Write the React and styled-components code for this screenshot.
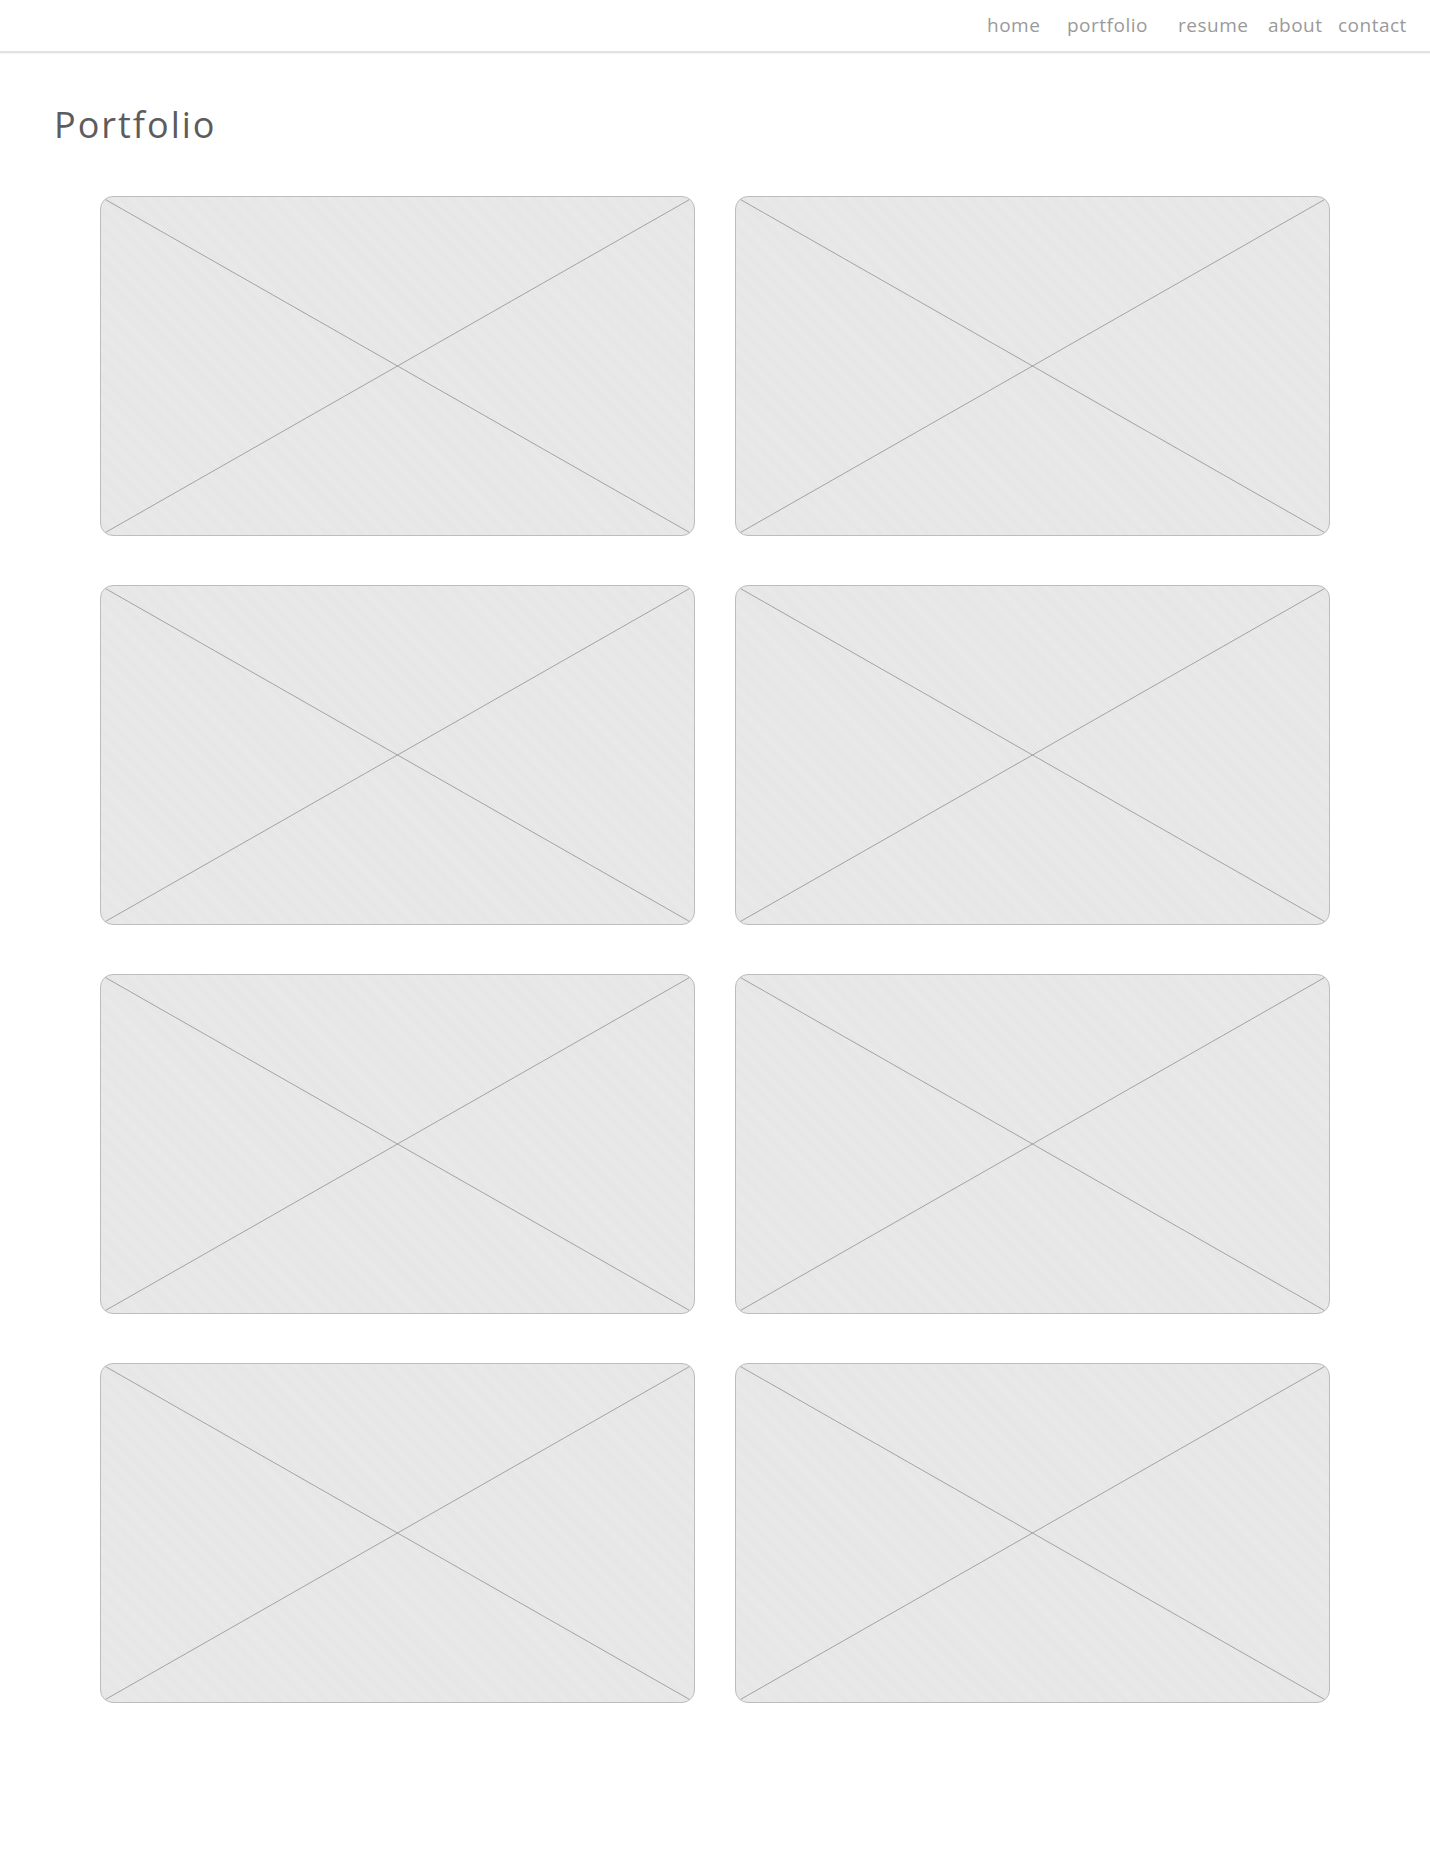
import React from 'react';
import styled, { createGlobalStyle } from 'styled-components';

const GlobalStyle = createGlobalStyle`
    html, body {
        margin: 0;
        padding: 0;
        background: #fff;
    }
    body {
        font-family: "Open Sans", "Noto Sans", sans-serif;
    }
`;

const Header = styled.header`
    height: 51px;
    border-bottom: 2px solid #e2e2e2;
    box-shadow: 0 1px 1px rgba(0, 0, 0, 0.04);
    display: flex;
    justify-content: flex-end;
    align-items: center;
    padding-right: 22px;
`;

const Nav = styled.nav`
    display: flex;
    align-items: center;
    height: 100%;
`;

const NavLink = styled.a`
    display: block;
    width: ${props => props.width}px;
    font-size: 19px;
    letter-spacing: 0.5px;
    color: #9a9a9a;
    text-decoration: none;
    line-height: 1;
    padding-bottom: 1px;
    white-space: nowrap;
`;

const Main = styled.main`
    padding: 0 0 0 54px;
`;

const Title = styled.h1`
    margin: 0;
    padding-top: 49px;
    font-size: 36px;
    font-weight: 400;
    letter-spacing: 2px;
    line-height: 1.25;
    color: #5c5c5c;
`;

const Grid = styled.div`
    display: grid;
    grid-template-columns: 595px 595px;
    column-gap: 40px;
    row-gap: 49px;
    margin: 49px 0 0 46px;
`;

const Card = styled.div`
    height: 338px;
    border: 1px solid #bdbdbd;
    border-radius: 13px;
    background-color: #e5e5e5;
    background-image: repeating-linear-gradient(45deg, rgba(255,255,255,0.18) 0 1px, transparent 1px 2px);
    overflow: hidden;
`;

const Cross = styled.svg`
    display: block;
    width: 100%;
    height: 100%;
`;

const links = [
    { label: 'home', width: 80 },
    { label: 'portfolio', width: 111 },
    { label: 'resume', width: 90 },
    { label: 'about', width: 70 },
    { label: 'contact', width: 70 },
];

function Placeholder() {
    return (
        <Card>
            <Cross viewBox="0 0 100 100" preserveAspectRatio="none">
                <line x1="0" y1="0" x2="100" y2="100" stroke="#a3a3a3" strokeWidth="1" vectorEffect="non-scaling-stroke" />
                <line x1="100" y1="0" x2="0" y2="100" stroke="#a3a3a3" strokeWidth="1" vectorEffect="non-scaling-stroke" />
            </Cross>
        </Card>
    );
}

export default function App() {
    return (
        <>
            <GlobalStyle />
            <Header>
                <Nav>
                    {links.map(l => (
                        <NavLink key={l.label} href="#" width={l.width}>{l.label}</NavLink>
                    ))}
                </Nav>
            </Header>
            <Main>
                <Title>Portfolio</Title>
                <Grid>
                    {Array.from({ length: 8 }).map((_, i) => <Placeholder key={i} />)}
                </Grid>
            </Main>
        </>
    );
}
